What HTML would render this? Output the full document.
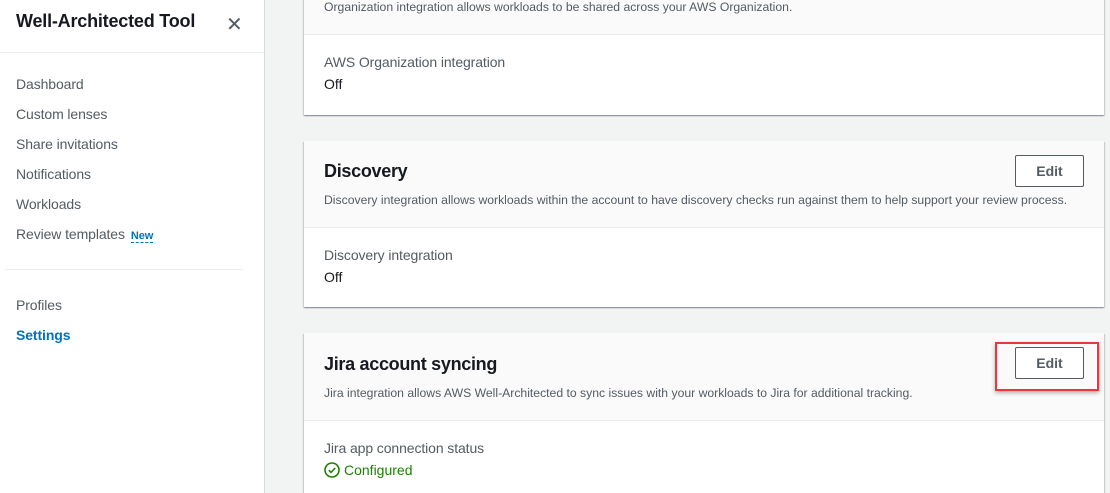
<!DOCTYPE html>
<html style="overflow:hidden"><head><meta charset="utf-8"><style>
*{box-sizing:border-box;margin:0;padding:0}
html,body{width:1110px;height:493px;overflow:hidden}
body{background:#f2f3f3;font-family:"Liberation Sans",Arial,sans-serif;color:#16191f;position:relative}
.side{position:absolute;left:0;top:0;width:265px;height:493px;background:#fff;border-right:1px solid #d5dbdb}
.side h1{position:absolute;left:16px;top:11px;font-size:18px;font-weight:bold;letter-spacing:-0.2px}
.x{position:absolute;left:226px;top:12px;font-size:20px;color:#545b64}
.hl{position:absolute;left:0;top:52px;width:264px;height:1px;background:#eaeded}
.nav{position:absolute;left:16px;font-size:14px;color:#545b64;letter-spacing:-0.1px}
.new{font-size:11px;color:#0073bb;font-weight:bold;border-bottom:1px dashed #0073bb;margin-left:6px}
.div{position:absolute;left:5px;top:269px;width:238px;height:1px;background:#eaeded}
.card{position:absolute;left:304px;width:800px;background:#fff;box-shadow:0 1px 1px 0 rgba(0,28,36,.3),1px 1px 1px 0 rgba(0,28,36,.15),-1px 1px 1px 0 rgba(0,28,36,.15)}
.hd{background:#fafafa;border-bottom:1px solid #eaeded;position:absolute;left:0;top:0;width:100%}
.t{position:absolute;left:20px;font-size:18px;font-weight:bold;letter-spacing:-0.3px}
.d{position:absolute;left:20px;font-size:12.2px;color:#545b64;white-space:nowrap}
.k{position:absolute;left:20px;font-size:14px;color:#545b64;letter-spacing:-0.1px}
.v{position:absolute;left:20px;font-size:14px;color:#16191f}
.btn{position:absolute;left:711px;width:69px;height:32px;border:1px solid #545b64;border-radius:2px;background:#fff;font-size:14px;font-weight:bold;color:#545b64;text-align:center;line-height:30px}
</style></head><body>
<div class="side">
<h1>Well-Architected Tool</h1>
<div class="x">✕</div>
<div class="hl"></div>
<div class="nav" style="top:76px">Dashboard</div>
<div class="nav" style="top:106px">Custom lenses</div>
<div class="nav" style="top:136px">Share invitations</div>
<div class="nav" style="top:166px">Notifications</div>
<div class="nav" style="top:196px">Workloads</div>
<div class="nav" style="top:226px">Review templates<span class="new">New</span></div>
<div class="div"></div>
<div class="nav" style="top:297px">Profiles</div>
<div class="nav" style="top:327px;color:#0073bb;font-weight:bold">Settings</div>
</div>

<div class="card" style="top:-40px;height:155px">
<div class="hd" style="height:75px"></div>
<div class="d" style="top:40px">Organization integration allows workloads to be shared across your AWS Organization.</div>
<div class="k" style="top:94px">AWS Organization integration</div>
<div class="v" style="top:116px">Off</div>
</div>

<div class="card" style="top:141px;height:166px">
<div class="hd" style="height:87px"></div>
<div class="t" style="top:20px">Discovery</div>
<div class="btn" style="top:14px">Edit</div>
<div class="d" style="top:52px">Discovery integration allows workloads within the account to have discovery checks run against them to help support your review process.</div>
<div class="k" style="top:106px">Discovery integration</div>
<div class="v" style="top:128px">Off</div>
</div>

<div class="card" style="top:333px;height:160px">
<div class="hd" style="height:88px"></div>
<div class="t" style="top:21px">Jira account syncing</div>
<div class="btn" style="top:14px">Edit</div>
<div class="d" style="top:53px">Jira integration allows AWS Well-Architected to sync issues with your workloads to Jira for additional tracking.</div>
<div class="k" style="top:107px">Jira app connection status</div>
<div class="v" style="top:129px;color:#1d8102;display:flex;align-items:center;gap:4px">
<svg width="16" height="16" viewBox="0 0 16 16"><circle cx="8" cy="8" r="7" fill="none" stroke="#1d8102" stroke-width="1.6"/><path d="M4.8 8.2l2.2 2.2 4.2-4.4" fill="none" stroke="#1d8102" stroke-width="1.6"/></svg>Configured</div>
</div>
<div style="position:absolute;left:995px;top:342px;width:104px;height:49px;border:2px solid #e8383d;box-shadow:0 2px 4px rgba(0,0,0,.3)"></div>
</body></html>
